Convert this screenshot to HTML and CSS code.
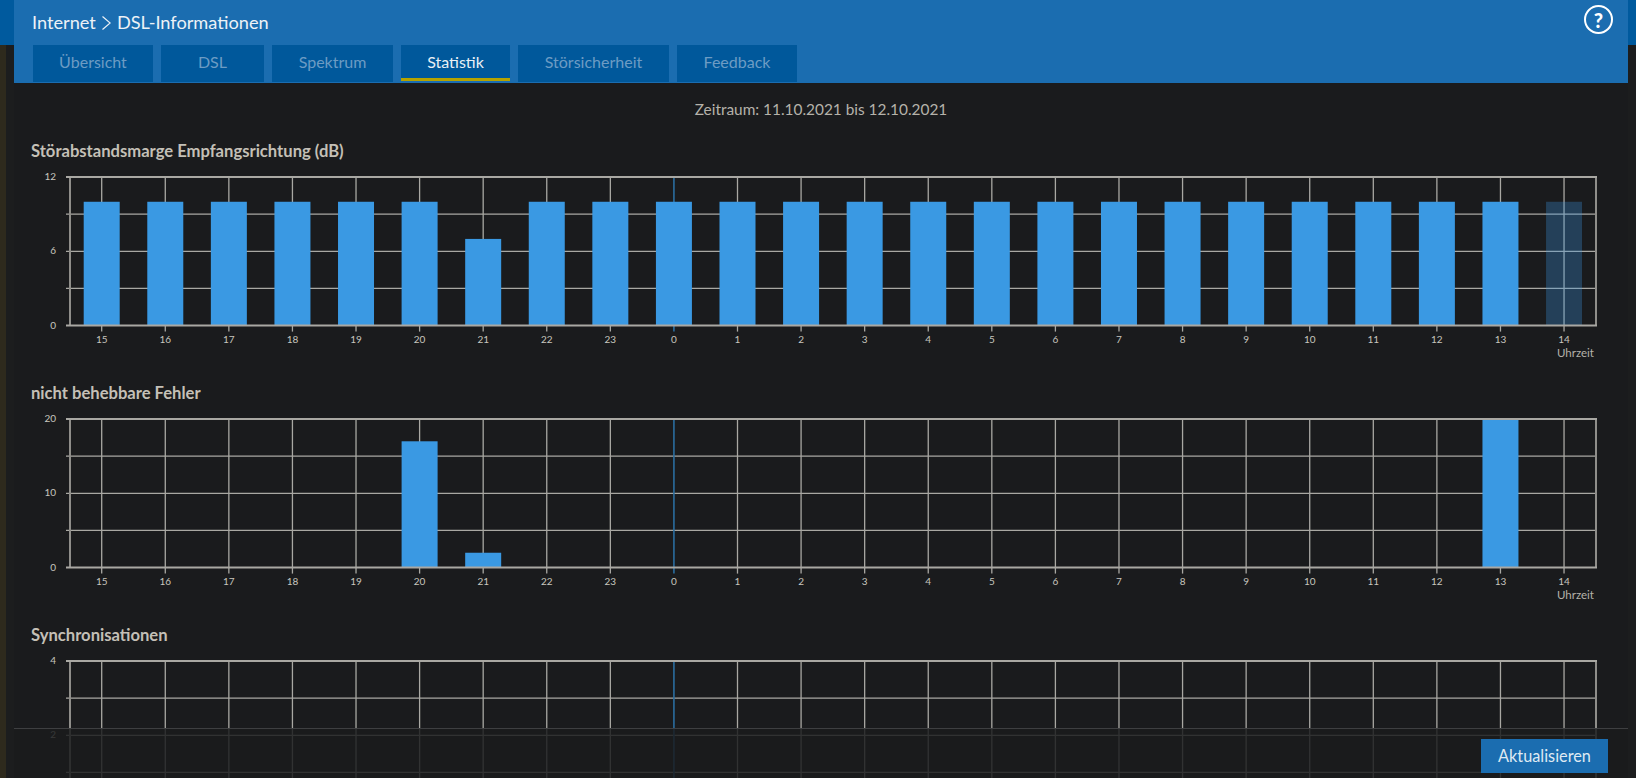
FILE: index.html
```html
<!DOCTYPE html>
<html lang="de">
<head>
<meta charset="utf-8">
<title>DSL-Informationen</title>
<link rel="stylesheet" href="styles.css">
</head>
<body>
<div class="shell">
  <div class="rail rail-left"><div class="rail-cap"></div><div class="rail-rest"></div></div>
  <main class="main">
    <header class="header">
      <div class="header-top">
        <h1 class="crumbs">
          <span>Internet</span>
          <svg class="crumb-sep" viewBox="0 0 9 14" width="9" height="14" aria-hidden="true"><polyline points="0.5,0.5 8.2,7 0.5,13.5"></polyline></svg>
          <span>DSL-Informationen</span>
        </h1>
        <a class="help" href="#" aria-label="Hilfe">?</a>
      </div>
      <nav class="tabs">
        <a class="tab" href="#">Übersicht</a>
        <a class="tab" href="#">DSL</a>
        <a class="tab" href="#">Spektrum</a>
        <a class="tab tab-active" href="#">Statistik</a>
        <a class="tab" href="#">Störsicherheit</a>
        <a class="tab" href="#">Feedback</a>
      </nav>
    </header>
    <div class="content">
      <p class="period">Zeitraum: 11.10.2021 bis 12.10.2021</p>
      <section class="chart">
        <h2 class="chart-title">Störabstandsmarge Empfangsrichtung (dB)</h2>
        <div class="plot" data-chart="margin"></div>
      </section>
      <section class="chart">
        <h2 class="chart-title">nicht behebbare Fehler</h2>
        <div class="plot" data-chart="errors"></div>
      </section>
      <section class="chart">
        <h2 class="chart-title">Synchronisationen</h2>
        <div class="plot" data-chart="sync"></div>
      </section>
    </div>
    <footer class="footer">
      <button class="btn" type="button">Aktualisieren</button>
    </footer>
  </main>
  <div class="rail rail-right"><div class="rail-cap"></div></div>
</div>
<script src="charts.js"></script>
</body>
</html>
```
FILE: styles.css
```css
* { box-sizing: border-box; }
html, body { margin: 0; padding: 0; height: 100%; }
body {
  background: #1a1b1d;
  font-family: "Lato", "Noto Sans", "Liberation Sans", sans-serif;
  overflow: hidden;
}
.shell { display: flex; height: 778px; overflow: hidden; }
.rail { display: flex; flex-direction: column; flex: none; background: #1c1d1e; }
.rail-left { width: 14px; }
.rail-right { width: 8px; }
.rail-cap { height: 45px; background: #005a9e; flex: none; }
.rail-rest { flex: 1; margin-right: 8px; background: #2e2a1d; }
.main { position: relative; flex: 1; min-width: 0; }

.header { height: 83px; background: #1b6db0; padding: 0 15px 0 19px; display: flex; flex-direction: column; }
.header-top { height: 45px; display: flex; justify-content: space-between; align-items: flex-start; }
.crumbs { margin: 12px 0 0 -1px; display: flex; align-items: center; gap: 6px; font-size: 18.2px; line-height: 21px; font-weight: 400; color: #edf2f7; }
.crumb-sep { fill: none; stroke: #edf2f7; stroke-width: 1.2; }
.help {
  width: 29px; height: 29px; margin-top: 5px; border: 2px solid #fff; border-radius: 50%;
  display: flex; align-items: center; justify-content: center;
  color: #fff; font-size: 20px; font-weight: 900; line-height: 1; text-decoration: none;
}
.tabs { display: grid; grid-template-columns: 120px 103px 121px 109px 151px 120px; column-gap: 8px; height: 37px; align-items: start; }
.tab {
  display: flex; align-items: center; justify-content: center; height: 37px; padding-bottom: 5px;
  background: #00589b; color: #6d9cc4; font-size: 16px; text-decoration: none;
}
.tab-active { color: #e9f0f5; border-bottom: 3px solid #b5a300; padding-bottom: 1px; height: 36px; }

.content { padding-top: 16px; }
.period { margin: 0 0 21px; height: 20px; line-height: 20px; text-align: center; font-size: 15.4px; color: #b5b2aa; }
.chart { height: 242px; }
.chart-title { margin: 0; padding-left: 17px; height: 22px; line-height: 22px; font-size: 16.6px; font-weight: 700; color: #c4c0b7; }
.plot { height: 220px; }
.plot svg { display: block; }

.grid-h { stroke: #a9a8a3; stroke-width: 1.3; }
.grid-edge { stroke: #a9a8a3; stroke-width: 2; }
.grid-v { stroke: #a9a8a3; stroke-width: 1.3; }
.grid-axis { stroke: #8f8e8a; stroke-width: 2; }
.grid-zero { stroke: #2a6d9f; stroke-width: 1.6; }
.bar { fill: #3a99e3; }
.bar-ghost { fill: #3a99e3; fill-opacity: 0.3; }
.tick { font-size: 10px; fill: #c8c6bf; }
.tick-y { text-anchor: end; }
.tick-x { text-anchor: middle; }
.unit { font-size: 11.5px; fill: #b5b2aa; text-anchor: end; }

.footer {
  position: absolute; left: 0; right: 0; top: 728px; bottom: 0;
  background: rgba(26, 27, 29, 0.84); border-top: 1px solid #3e3f41;
  display: flex; justify-content: flex-end; align-items: flex-start; padding: 10px 20px 0 0;
}
.btn {
  width: 127px; height: 34px; border: 0; padding: 0 0 2px; background: #1b6db0; color: #dfeaf3;
  font: 16.3px "Lato", "Noto Sans", "Liberation Sans", sans-serif;
}
```
FILE: charts.js
```js
(function () {
  var NS = 'http://www.w3.org/2000/svg';
  var HOURS = [15, 16, 17, 18, 19, 20, 21, 22, 23, 0, 1, 2, 3, 4, 5, 6, 7, 8, 9, 10, 11, 12, 13, 14];
  var TOP = 15, H = 148.6, LEFT = 52, RIGHT = 1582, FIRST = 87.7, STEP = 63.58, BAR = 36;

  function margin() {
    var v = {};
    HOURS.forEach(function (h) { v[h] = 10; });
    v[21] = 7;
    return v;
  }
  var CHARTS = {
    margin: { max: 12, labels: [0, 6, 12], values: margin(), ghost: 14, hours: true },
    errors: { max: 20, labels: [0, 10, 20], values: { 20: 17, 21: 2, 13: 20 }, hours: true },
    sync: { max: 4, labels: [2, 4], values: {}, hours: false }
  };

  function el(parent, name, attrs, text) {
    var n = document.createElementNS(NS, name);
    Object.keys(attrs).forEach(function (k) { n.setAttribute(k, attrs[k]); });
    if (text !== undefined) n.textContent = text;
    parent.appendChild(n);
    return n;
  }
  function line(svg, x1, y1, x2, y2, cls) {
    el(svg, 'line', { x1: x1, y1: y1, x2: x2, y2: y2, 'class': cls });
  }

  document.querySelectorAll('.plot').forEach(function (plot) {
    var c = CHARTS[plot.getAttribute('data-chart')];
    var svg = el(plot, 'svg', { width: 1614, height: 220, viewBox: '0 0 1614 220' });
    var bottom = TOP + H;

    [1, 2, 3].forEach(function (i) {
      var y = TOP + H * i / 4;
      line(svg, LEFT, y, RIGHT, y, 'grid-h');
    });
    line(svg, LEFT + 4, TOP, LEFT + 4, bottom, 'grid-axis');
    line(svg, RIGHT, TOP, RIGHT, bottom, 'grid-axis');

    HOURS.forEach(function (h, i) {
      var x = FIRST + STEP * i;
      line(svg, x, TOP, x, bottom + 6, h === 0 ? 'grid-zero' : 'grid-v');
    });
    HOURS.forEach(function (h, i) {
      var x = FIRST + STEP * i;
      var v = c.values[h];
      if (v) {
        var bh = H * v / c.max;
        el(svg, 'rect', { x: x - BAR / 2, y: bottom - bh, width: BAR, height: bh, 'class': h === c.ghost ? 'bar-ghost' : 'bar' });
      }
      if (c.hours) el(svg, 'text', { x: x, y: bottom + 17.5, 'class': 'tick tick-x' }, String(h));
    });
    line(svg, LEFT, TOP, RIGHT + 1, TOP, 'grid-edge');
    line(svg, LEFT, bottom, RIGHT + 1, bottom, 'grid-edge');

    c.labels.forEach(function (val) {
      var y = bottom - H * val / c.max;
      el(svg, 'text', { x: 42, y: y + 3, 'class': 'tick tick-y' }, String(val));
    });
    if (c.hours) el(svg, 'text', { x: 1580, y: bottom + 31, 'class': 'unit' }, 'Uhrzeit');
  });
})();
```
